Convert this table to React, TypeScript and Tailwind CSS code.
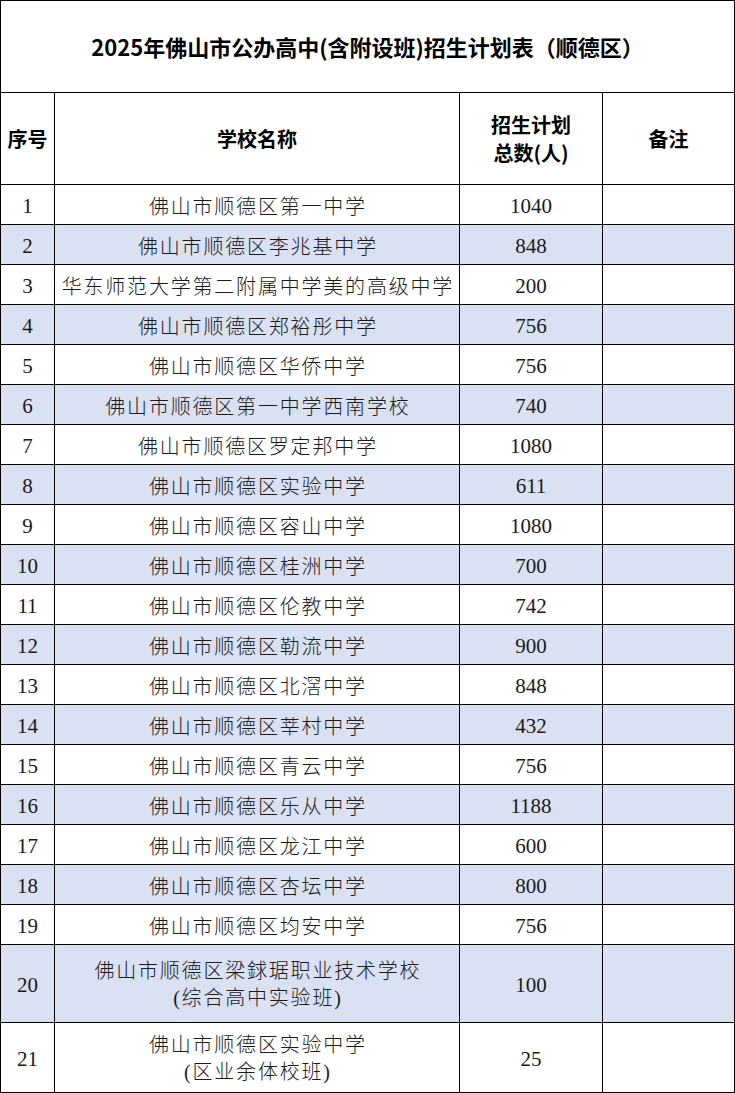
import React from "react";

type Row = { n: number; name: string[]; total: string; h?: string };

const rows: Row[] = [
  { n: 1, name: ["佛山市顺德区第一中学"], total: "1040" },
  { n: 2, name: ["佛山市顺德区李兆基中学"], total: "848" },
  { n: 3, name: ["华东师范大学第二附属中学美的高级中学"], total: "200" },
  { n: 4, name: ["佛山市顺德区郑裕彤中学"], total: "756" },
  { n: 5, name: ["佛山市顺德区华侨中学"], total: "756" },
  { n: 6, name: ["佛山市顺德区第一中学西南学校"], total: "740" },
  { n: 7, name: ["佛山市顺德区罗定邦中学"], total: "1080" },
  { n: 8, name: ["佛山市顺德区实验中学"], total: "611" },
  { n: 9, name: ["佛山市顺德区容山中学"], total: "1080" },
  { n: 10, name: ["佛山市顺德区桂洲中学"], total: "700" },
  { n: 11, name: ["佛山市顺德区伦教中学"], total: "742" },
  { n: 12, name: ["佛山市顺德区勒流中学"], total: "900" },
  { n: 13, name: ["佛山市顺德区北滘中学"], total: "848" },
  { n: 14, name: ["佛山市顺德区莘村中学"], total: "432" },
  { n: 15, name: ["佛山市顺德区青云中学"], total: "756" },
  { n: 16, name: ["佛山市顺德区乐从中学"], total: "1188" },
  { n: 17, name: ["佛山市顺德区龙江中学"], total: "600" },
  { n: 18, name: ["佛山市顺德区杏坛中学"], total: "800" },
  { n: 19, name: ["佛山市顺德区均安中学"], total: "756" },
  { n: 20, name: ["佛山市顺德区梁銶琚职业技术学校", "(综合高中实验班)"], total: "100", h: "h-[78px]" },
  { n: 21, name: ["佛山市顺德区实验中学", "(区业余体校班)"], total: "25", h: "h-[70px]" },
];

const serif = "font-['Liberation_Serif','Noto_Sans_CJK_SC',serif]";
const sans = "font-['Noto_Sans_CJK_SC','Liberation_Sans',sans-serif]";

export default function App() {
  return (
    <div className="w-[735px] h-[1093px] bg-white overflow-hidden">
      <div className="border-l border-t border-black w-[735px]">
        <div className={`h-[92px] border-r border-b border-black flex items-center justify-center text-[22px] font-bold text-black ${sans}`}>
          2025年佛山市公办高中(含附设班)招生计划表（顺德区）
        </div>
        <div className={`grid grid-cols-[54px_405px_143px_132px] h-[92px] text-[20px] font-bold text-black ${sans}`}>
          <div className="border-r border-b border-black flex items-center justify-center">序号</div>
          <div className="border-r border-b border-black flex items-center justify-center">学校名称</div>
          <div className="border-r border-b border-black flex flex-col items-center justify-center leading-[28px]">
            <span>招生计划</span>
            <span>总数(人)</span>
          </div>
          <div className="border-r border-b border-black flex items-center justify-center">备注</div>
        </div>
        {rows.map((r) => {
          const multi = r.name.length > 1;
          return (
            <div
              key={r.n}
              className={`grid grid-cols-[54px_405px_143px_132px] ${r.h ?? "h-[40px]"} ${r.n % 2 === 0 ? "bg-[#d9e1f2]" : "bg-white"} text-[#1a1a1a] ${serif}`}
            >
              <div className="border-r border-b border-black flex items-center justify-center text-[21px] pt-[5px]">{r.n}</div>
              <div className={`border-r border-b border-black flex flex-col items-center justify-center text-[20px] font-light leading-[27px] ${multi ? "pt-[2px]" : "pt-[5px]"}`}>
                {r.name.map((t, i) => (
                  <span key={i} className="tracking-[1.8px] pl-[1.8px]">{t}</span>
                ))}
              </div>
              <div className="border-r border-b border-black flex items-center justify-center text-[21px] pt-[5px]">{r.total}</div>
              <div className="border-r border-b border-black"></div>
            </div>
          );
        })}
      </div>
    </div>
  );
}
